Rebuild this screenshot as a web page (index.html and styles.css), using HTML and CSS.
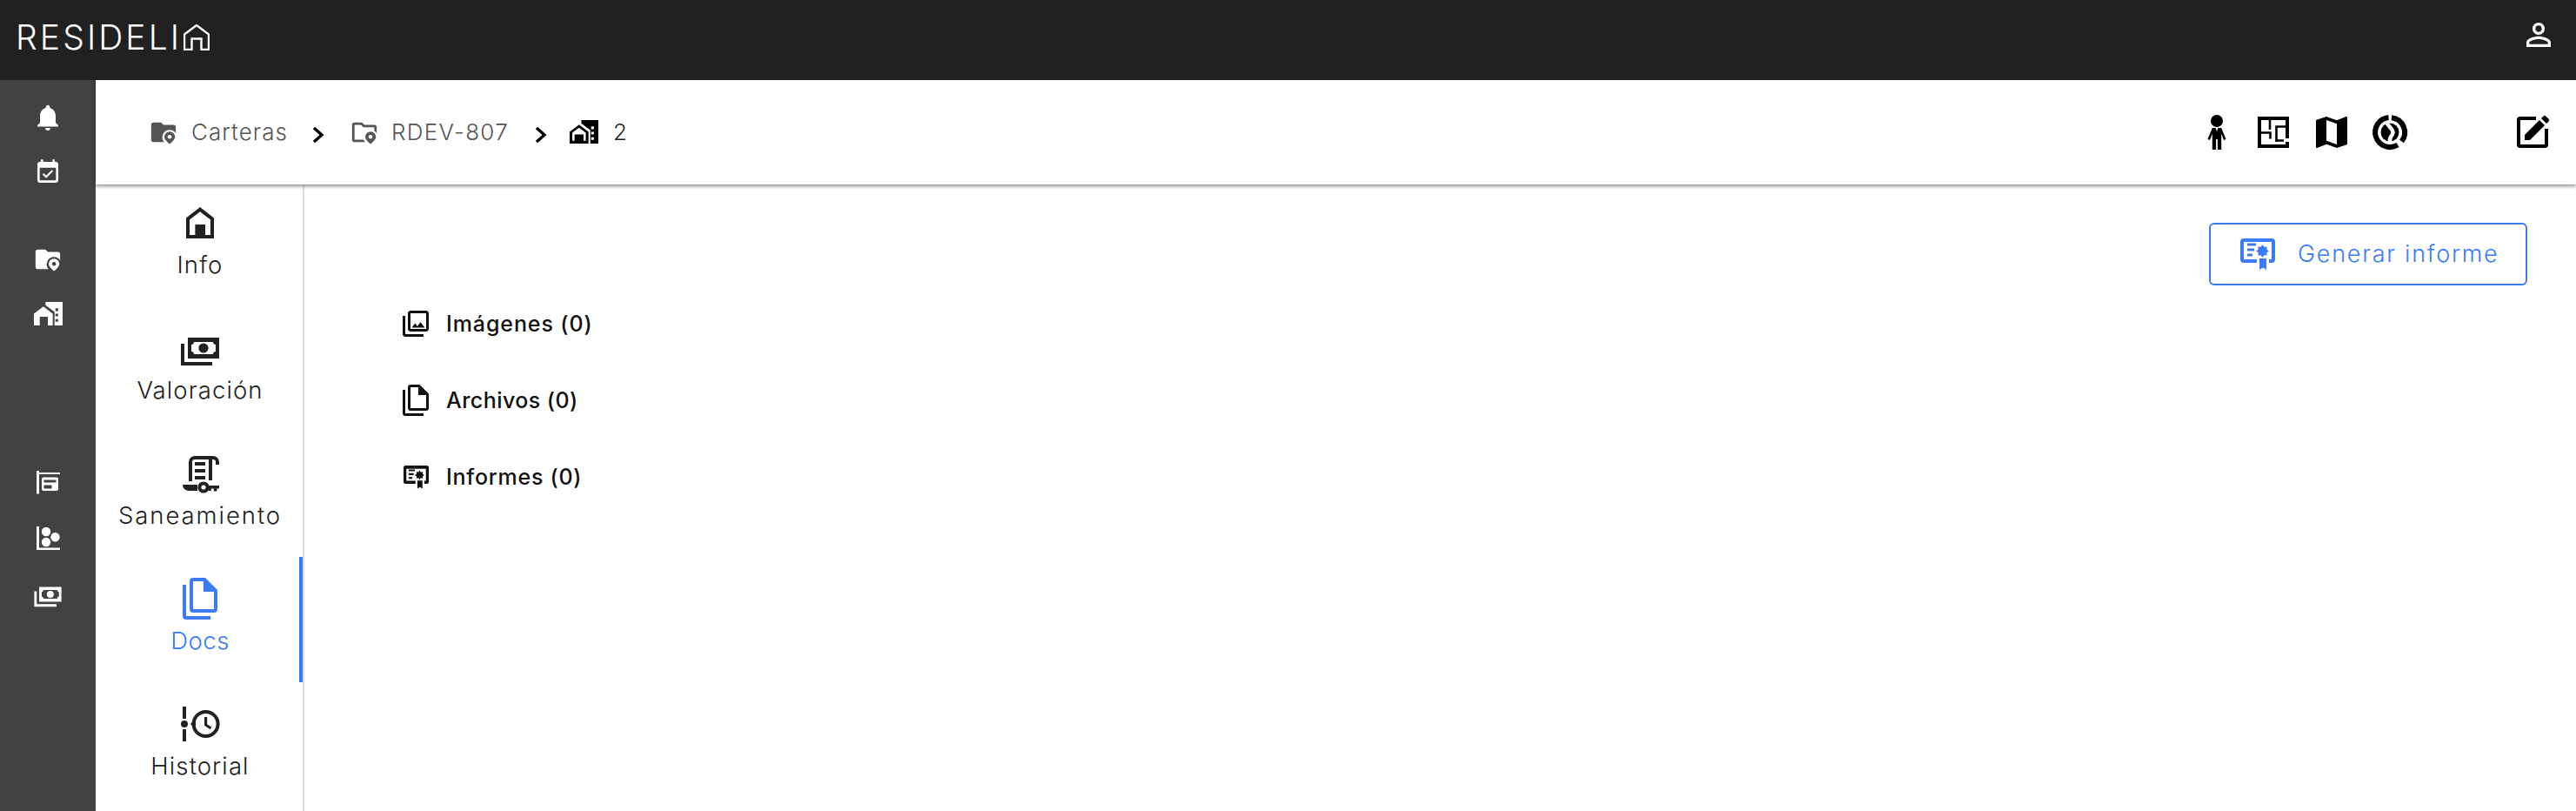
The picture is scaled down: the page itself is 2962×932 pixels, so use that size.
FILE: index.html
```html
<!DOCTYPE html>
<html lang="es">
<head>
<meta charset="utf-8">
<title>Residelia</title>
<link rel="stylesheet" href="styles.css">
</head>
<body>
<svg class="sprite" xmlns="http://www.w3.org/2000/svg">
  <symbol id="i-folder-pin" viewBox="0 0 24 24">
    <path d="M10 4H4a2 2 0 0 0-2 2v12a2 2 0 0 0 2 2h16a2 2 0 0 0 2-2V8a2 2 0 0 0-2-2h-8z"/>
    <circle class="cut" cx="17" cy="16" r="6"/>
    <path d="M17 11.400a4.300 4.300 0 0 0-4.300 4.300c0 2.800 4.300 5.800 4.300 5.800s4.300-3 4.300-5.800a4.300 4.300 0 0 0-4.300-4.300z"/>
    <circle class="cut" cx="17" cy="15.700" r="1.600"/>
  </symbol>
  <symbol id="i-folder-pin-o" viewBox="0 0 24 24">
    <path fill-rule="evenodd" d="M10 4H4a2 2 0 0 0-2 2v12a2 2 0 0 0 2 2h16a2 2 0 0 0 2-2V8a2 2 0 0 0-2-2h-8zM4 6h5.200l2 2H20v10H4z"/>
    <circle class="cut" cx="17" cy="16" r="6"/>
    <path d="M17 11.400a4.300 4.300 0 0 0-4.300 4.300c0 2.800 4.300 5.800 4.300 5.800s4.300-3 4.300-5.800a4.300 4.300 0 0 0-4.300-4.300z"/>
    <circle class="cut" cx="17" cy="15.700" r="1.600"/>
  </symbol>
  <symbol id="i-building" viewBox="0 0 32 26">
    <path fill-rule="evenodd" d="M13 0h19v26h-9V11L13 3.500zM24 7v3h3V7zm0 6v3h3v-3zm0 6v3h3v-3z"/>
    <path d="M10.500 5 21 13v13h-5.500v-9.500h-9V26H0V13z"/>
  </symbol>
  <symbol id="i-building-o" viewBox="0 0 32 26">
    <path fill-rule="evenodd" d="M13 0h19v26h-9V11L13 3.500zM24 7v3h3V7zm0 6v3h3v-3zm0 6v3h3v-3z"/>
    <path fill-rule="evenodd" d="M10.500 5 21 13v13H0V13zm0 3.300L3 14v9h2.500v-7h10v7H18v-9z"/>
  </symbol>
  <symbol id="i-bell" viewBox="0 0 24 24">
    <path d="M12 22c1.100 0 2-.9 2-2h-4c0 1.100.89 2 2 2zm6-6v-5c0-3.070-1.640-5.640-4.500-6.320V4c0-.83-.67-1.500-1.500-1.500s-1.500.67-1.500 1.500v.68C7.630 5.360 6 7.920 6 11v5l-2 2v1h16v-1l-2-2z"/>
  </symbol>
  <symbol id="i-calendar" viewBox="0 0 24 24">
    <path d="M16.530 11.060 15.470 10l-4.880 4.880-2.120-2.120-1.060 1.060L10.590 17l5.940-5.940zM19 3h-1V1h-2v2H8V1H6v2H5c-1.110 0-1.990.9-1.990 2L3 19c0 1.100.89 2 2 2h14c1.100 0 2-.9 2-2V5c0-1.100-.9-2-2-2zm0 16H5V8h14v11z"/>
  </symbol>
  <symbol id="i-sign" viewBox="0 0 27 27">
    <path d="M0 0h3v26.500H0zM3 2h24v2H3z"/>
    <path fill-rule="evenodd" d="M8 7.500h15a2 2 0 0 1 2 2V21a2 2 0 0 1-2 2H8a2 2 0 0 1-2-2V9.500a2 2 0 0 1 2-2zm.5 3v3h14v-3zm0 6v4h9v-4z"/>
  </symbol>
  <symbol id="i-chart" viewBox="0 0 27 27">
    <path d="M0 0h3v24.500h24V27H0z"/>
    <circle cx="11" cy="6" r="5.200"/>
    <circle cx="21.500" cy="12.300" r="5.200"/>
    <circle cx="11" cy="18" r="5.200"/>
  </symbol>
  <symbol id="i-money" viewBox="0 0 24 24">
    <path fill-rule="evenodd" d="M5 6h18v12H5zM8.500 8.500h11A1.500 1.500 0 0 0 21 10v4a1.500 1.500 0 0 0-1.500 1.500h-11A1.500 1.500 0 0 0 7 14v-4a1.500 1.500 0 0 0 1.500-1.500z"/>
    <circle cx="14" cy="12" r="2.800"/>
    <path d="M1 9.500h2V20h16v2H1z"/>
  </symbol>
  <symbol id="i-home" viewBox="0 0 24 24">
    <path fill-rule="evenodd" d="M12 3l8 6.200V21H4V9.200zm0 2.600L6 10.200V19h12v-8.800z"/>
    <path d="M9.200 13h5.800v7H9.200z"/>
  </symbol>
  <symbol id="i-scroll" viewBox="0 0 24 24">
    <path class="ln" d="M6.500 16.500V5.500a2.500 2.500 0 0 1 2.500-2.500h10.500a2.500 2.500 0 0 1 2.500 2.500V7"/>
    <path class="ln" d="M18 3.500V16"/>
    <path d="M9 5.500h6v2H9zM9 9.500h6v2H9zM9 13.500h6v2H9z"/>
    <path d="M2 18.500h8.500V22H5.500A3.500 3.500 0 0 1 2 18.500z"/>
    <circle class="ln" cx="14" cy="20" r="2.300"/>
    <path d="M16 19h7v1.800h-1.300v1.400h-1.800v-1.400h-1.500v1.200H17v-1.200h-1z"/>
  </symbol>
  <symbol id="i-docs" viewBox="0 0 24 24">
    <path fill-rule="evenodd" d="M8 0h7l7 7v11a2 2 0 0 1-2 2H8a2 2 0 0 1-2-2V2a2 2 0 0 1 2-2zm0 2v16h12V8h-6V2z"/>
    <path d="M2 4h2v18h14v2H4a2 2 0 0 1-2-2z"/>
  </symbol>
  <symbol id="i-history" viewBox="0 0 24 24">
    <path d="M2 2h2v7H2zM2 15h2v7H2z"/>
    <circle cx="3" cy="12" r="2"/>
    <path d="M6.500 12 9.500 8.800v6.400z"/>
    <circle class="ln" cx="15.300" cy="12" r="7"/>
    <path class="ln thin" d="M15.300 8v4.500l3 2"/>
  </symbol>
  <symbol id="i-cert" viewBox="0 0 40 36">
    <path class="ln cert" d="M19 26H4a2 2 0 0 1-2-2V4a2 2 0 0 1 2-2h32a2 2 0 0 1 2 2v20a2 2 0 0 1-2 2h-3"/>
    <path d="M8 5.500h10v3H8zM8 11.500h8v3H8zM8 17.500h6v3H8z"/>
    <path d="M25.500 7l1.900 2.800 3.300-.4-.4 3.300L33 14.500l-2.700 1.800.4 3.300-3.300-.4-1.900 2.800-1.900-2.800-3.300.4.4-3.300-2.700-1.800 2.700-1.800-.4-3.300 3.300.4z"/>
    <path d="M22 23h8v13l-4-2.500-4 2.500z"/>
  </symbol>
  <symbol id="i-media" viewBox="0 0 24 24">
    <path d="M20 4v12H8V4h12m0-2H8c-1.100 0-2 .9-2 2v12c0 1.100.9 2 2 2h12c1.100 0 2-.9 2-2V4c0-1.100-.9-2-2-2zm-8.500 9.670 1.690 2.260 2.480-3.100L19 15H9zM2 6v14c0 1.100.9 2 2 2h14v-2H4V6H2z"/>
  </symbol>
</svg>

<header class="topbar">
  <div class="logo">
    <span class="logo-text">RESIDELI</span>
    <svg class="logo-mark" viewBox="0 0 30 30"><path d="M1 29V11.500L15 1l14 10.500V29h-8.500V16.500h-11V29z"/></svg>
  </div>
  <svg class="user" viewBox="0 0 24 24"><path d="M12 5.900c1.160 0 2.100.94 2.100 2.100s-.94 2.100-2.100 2.100S9.900 9.160 9.900 8s.94-2.100 2.100-2.100m0 9c2.970 0 6.100 1.460 6.100 2.100v1.100H5.900V17c0-.64 3.130-2.100 6.100-2.100M12 4C9.790 4 8 5.790 8 8s1.790 4 4 4 4-1.790 4-4-1.790-4-4-4zm0 9c-2.670 0-8 1.340-8 4v3h16v-3c0-2.660-5.330-4-8-4z"/></svg>
</header>

<div class="shell">
  <aside class="rail">
    <div class="rail-group">
      <a class="rail-item"><svg class="ic-bell"><use href="#i-bell"/></svg></a>
      <a class="rail-item"><svg class="ic-cal"><use href="#i-calendar"/></svg></a>
    </div>
    <div class="rail-group">
      <a class="rail-item"><svg class="ic-34"><use href="#i-folder-pin"/></svg></a>
      <a class="rail-item"><svg class="ic-b"><use href="#i-building"/></svg></a>
    </div>
    <div class="rail-group rail-group-low">
      <a class="rail-item"><svg class="ic-27"><use href="#i-sign"/></svg></a>
      <a class="rail-item"><svg class="ic-27"><use href="#i-chart"/></svg></a>
      <a class="rail-item"><svg class="ic-34"><use href="#i-money"/></svg></a>
    </div>
  </aside>

  <div class="page">
    <div class="crumbbar">
      <nav class="crumbs">
        <svg class="ic-34 c-grey"><use href="#i-folder-pin"/></svg>
        <span class="crumb crumb-1">Carteras</span>
        <svg class="chev chev-1" viewBox="0 0 14 20"><path d="M2 2l9 8-9 8"/></svg>
        <svg class="ic-34 c-grey"><use href="#i-folder-pin-o"/></svg>
        <span class="crumb crumb-2">RDEV-807</span>
        <svg class="chev chev-2" viewBox="0 0 14 20"><path d="M2 2l9 8-9 8"/></svg>
        <svg class="ic-b c-black"><use href="#i-building-o"/></svg>
        <span class="crumb crumb-3">2</span>
      </nav>
      <div class="tools">
        <svg class="tool tool-person" viewBox="0 0 48 48"><circle cx="24" cy="11" r="7"/><path d="M18.800 19 13.500 32l2.500 1 2.800-7.500V44h4.300V32h1.800v12h4.300V25.500l2.800 7.500 2.500-1L29.200 19h-3.700L24 23l-1.500-4z"/></svg>
        <svg class="tool" viewBox="0 0 48 48"><path class="plan" d="M40 31V8H8v32h32v-5"/><path class="plan thin" d="M20 8v13M10 24.500h10.500v7M27.500 35V17.500H38M27.500 33.500H36"/></svg>
        <svg class="tool" viewBox="0 0 24 24"><path d="M20.500 3l-.16.03L15 5.100 9 3 3.360 4.900c-.21.07-.36.25-.36.48V20.500c0 .28.22.5.5.5l.16-.03L9 18.900l6 2.100 5.640-1.900c.21-.07.36-.25.36-.48V3.500c0-.28-.22-.5-.5-.5zM15 19l-6-2.110V5l6 2.110V19z"/></svg>
        <svg class="tool" viewBox="0 0 48 48"><path class="donut" d="M26 7.200A17 17 0 0 1 37.500 34.500M33 38.500A17 17 0 1 1 22.500 7.100"/><circle cx="24" cy="24" r="10.500"/><path class="wave" d="M20 12C22 18 28 20 27.500 24.500S22 29 24.500 36"/></svg>
        <svg class="tool tool-edit" viewBox="0 0 24 24"><path d="M5 21a2 2 0 0 1-2-2V5a2 2 0 0 1 2-2h9v2H5v14h14v-9h2v9a2 2 0 0 1-2 2z"/><path d="M7.500 16.500v-3L16 5l3 3-8.500 8.500zM17 4l1.300-1.300a.9.9 0 0 1 1.300 0l1.700 1.700a.9.900 0 0 1 0 1.300L20 7z"/></svg>
      </div>
    </div>

    <div class="body">
      <nav class="subnav">
        <a class="sub"><svg class="ic-48"><use href="#i-home"/></svg><span>Info</span></a>
        <a class="sub"><svg class="ic-48"><use href="#i-money"/></svg><span>Valoración</span></a>
        <a class="sub sub-wide"><svg class="ic-48"><use href="#i-scroll"/></svg><span>Saneamiento</span></a>
        <a class="sub sub-active"><svg class="ic-48"><use href="#i-docs"/></svg><span>Docs</span></a>
        <a class="sub"><svg class="ic-48"><use href="#i-history"/></svg><span>Historial</span></a>
      </nav>

      <main class="content">
        <div class="actions">
          <button class="btn"><svg class="btn-ic"><use href="#i-cert"/></svg><span>Generar informe</span></button>
        </div>
        <ul class="files">
          <li class="file"><span class="file-ic"><svg class="ic-36"><use href="#i-media"/></svg></span><span class="file-t file-t1">Imágenes (0)</span></li>
          <li class="file"><span class="file-ic"><svg class="ic-36"><use href="#i-docs"/></svg></span><span class="file-t file-t2">Archivos (0)</span></li>
          <li class="file"><span class="file-ic"><svg class="ic-cert"><use href="#i-cert"/></svg></span><span class="file-t file-t3">Informes (0)</span></li>
        </ul>
      </main>
    </div>
  </div>
</div>
</body>
</html>
```
FILE: styles.css
```css
* { box-sizing: border-box; }
html, body { margin: 0; height: 100%; }
body {
  width: 2962px;
  height: 932px;
  overflow: hidden;
  background: #fff;
  color: #212121;
  font-family: Inter, "Noto Sans", "Liberation Sans", sans-serif;
  display: flex;
  flex-direction: column;
}
svg { display: block; fill: currentColor; flex: none; }
.sprite { display: none; }
.cut { fill: var(--cut, #fff); }
.ln { fill: none; stroke: currentColor; stroke-width: 2; }
.ln.thin { stroke-width: 1.6; }
.ln.cert { stroke-width: var(--cert-w, 4); }

.topbar {
  height: 92px;
  flex: none;
  background: #212121;
  color: #fff;
  display: flex;
  align-items: center;
  justify-content: space-between;
  padding: 0 22px 0 18px;
}
.logo { display: flex; align-items: center; gap: 5px; margin-bottom: 6px; }
.logo-text {
  font-size: 39px;
  font-weight: 300;
  line-height: 44px;
  letter-spacing: 3.1px;
}
.logo-mark { width: 30px; height: 30px; fill: none; stroke: #fff; stroke-width: 2.4; margin-left: -3px; }
.user { width: 42px; height: 42px; margin-bottom: 12px; }

.shell { flex: 1; display: flex; min-height: 0; }

.rail {
  width: 110px;
  flex: none;
  background: #424242;
  color: #fff;
  --cut: #424242;
  padding-top: 11px;
  display: flex;
  flex-direction: column;
  gap: 37px;
}
.rail-group { display: flex; flex-direction: column; }
.rail-group-low { margin-top: 94px; gap: 1px; }
.rail-item { height: 63px; display: flex; align-items: center; justify-content: center; }
.ic-bell { width: 36px; height: 36px; }
.ic-cal { width: 32px; height: 32px; }
.ic-34 { width: 34px; height: 34px; }
.ic-b { width: 33px; height: 27px; }
.ic-27 { width: 27px; height: 27px; }
.ic-48 { width: 48px; height: 48px; }
.ic-36 { width: 36px; height: 36px; }
.ic-cert { width: 29px; height: 27px; --cert-w: 5; }

.page { flex: 1; display: flex; flex-direction: column; min-width: 0; }

.crumbbar {
  height: 120px;
  flex: none;
  background: #fff;
  display: flex;
  align-items: center;
  justify-content: space-between;
  padding: 0 26px 0 61px;
  box-shadow: 0 2px 4px rgba(0, 0, 0, .45);
  position: relative;
  z-index: 2;
  --cut: #fff;
}
.crumbs { display: flex; align-items: center; height: 100%; }
.c-grey { color: #555; }
.c-black { color: #000; margin: -2px 17px 0 0; }
.crumb { font-size: 26px; line-height: 36px; font-weight: 300; color: #555; }
.crumb-1 { margin-left: 15px; letter-spacing: 1.05px; }
.crumb-2 { margin-left: 14px; letter-spacing: 1.3px; }
.crumb-3 { color: #212121; }
.chev {
  width: 14px;
  height: 20px;
  margin: 6px 29px 0 28px;
  fill: none;
  stroke: #000;
  stroke-width: 3.4;
}
.chev-2 { margin-right: 26px; margin-left: 30px; }
.tools { display: flex; align-items: center; gap: 19px; }
.tool { width: 48px; height: 48px; color: #000; }
.tool-person { transform: translateX(2px); }
.tool-edit { margin-left: 97px; }
.plan { fill: none; stroke: #000; stroke-width: 4; }
.plan.thin { stroke-width: 2.6; }
.donut { fill: none; stroke: #000; stroke-width: 6; }
.wave { fill: none; stroke: #fff; stroke-width: 4.5; }

.body { flex: 1; display: flex; min-height: 0; margin-top: -4px; }

.subnav {
  width: 240px;
  flex: none;
  box-shadow: inset -2px 0 #dedede;
  display: flex;
  flex-direction: column;
}
.sub {
  height: 144px;
  flex: none;
  position: relative;
  padding-top: 24px;
  display: flex;
  flex-direction: column;
  align-items: center;
  font-size: 27.500px;
  font-weight: 300;
  line-height: 36px;
  gap: 6px;
  letter-spacing: 1.1px;
}
.sub-wide { letter-spacing: 1.95px; }
.sub-active { color: #3b7cf6; letter-spacing: .5px; }
.sub-active::after {
  content: "";
  position: absolute;
  right: 2px;
  top: 0;
  width: 4px;
  height: 144px;
  background: #3b7cf6;
}

.content { flex: 1; min-width: 0; padding-top: 48px; }
.actions { display: flex; justify-content: flex-end; padding-right: 56px; height: 72px; }
.btn {
  width: 366px;
  height: 72px;
  border: 2px solid #3b7cf6;
  border-radius: 6px;
  background: #fff;
  color: #3b7cf6;
  display: flex;
  align-items: center;
  padding: 0 0 0 34px;
  font: 300 27px/36px Inter, "Noto Sans", sans-serif;
  letter-spacing: 1.75px;
  gap: 26px;
}
.btn-ic { width: 40px; height: 36px; }

.files { list-style: none; margin: 0; padding: 0 0 0 110px; }
.file {
  height: 88px;
  display: flex;
  align-items: center;
  font-size: 25px;
  font-weight: 500;
  color: #111;
}
.file-ic { width: 36px; display: flex; justify-content: center; margin-right: 17px; }
.file-t1 { letter-spacing: .9px; }
.file-t2 { letter-spacing: .45px; }
.file-t3 { letter-spacing: .75px; }
```
